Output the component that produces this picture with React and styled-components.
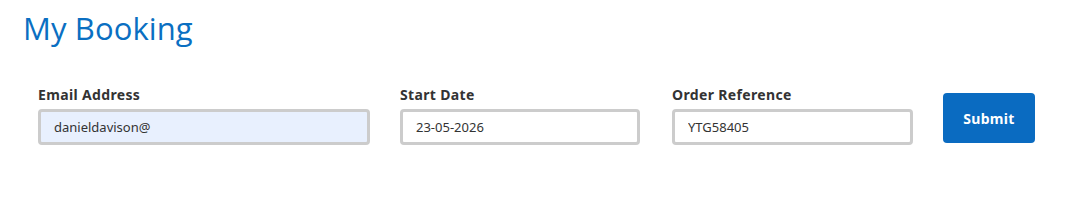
import React from "react";
import styled, { createGlobalStyle } from "styled-components";

const Global = createGlobalStyle`
  html, body { margin: 0; padding: 0; background: #fff; }
  body { font-family: "Open Sans", "Noto Sans", sans-serif; color: #333; }
  * { box-sizing: border-box; }
`;

const Page = styled.div`
  padding: 7px 0 0 23px;
`;

const Title = styled.h1`
  margin: 0;
  font-family: "Open Sans", sans-serif;
  font-weight: 400;
  font-size: 31px;
  line-height: 42px;
  color: #0a6fc2;
  letter-spacing: 0.1px;
`;

const Form = styled.form`
  display: flex;
  align-items: flex-end;
  margin: 36px 0 0 15px;
`;

const Field = styled.label`
  display: flex;
  flex-direction: column;
  width: ${(p) => p.$w}px;
  margin-right: ${(p) => p.$gap}px;
`;

const LabelText = styled.span`
  font-family: "Noto Sans", sans-serif;
  font-weight: 700;
  font-size: 14px;
  letter-spacing: 0.35px;
  line-height: 19px;
  color: #333;
  margin-bottom: 5px;
`;

const Input = styled.input`
  height: 36px;
  width: 100%;
  border: 3px solid #cccccc;
  border-radius: 4px;
  padding: 0 13px;
  font-family: "Noto Sans", sans-serif;
  font-size: 13px;
  color: #333;
  background: ${(p) => (p.$filled ? "#e8f0fe" : "#fff")};
  outline: none;
`;

const Button = styled.button`
  width: 92px;
  height: 50px;
  margin-bottom: 2px;
  border: none;
  border-radius: 4px;
  background: #0a6bc1;
  color: #fff;
  font-family: "Noto Sans", sans-serif;
  font-weight: 700;
  font-size: 14px;
  letter-spacing: 0.3px;
`;

export default function App() {
  return (
    <>
      <Global />
      <Page>
        <Title>My Booking</Title>
        <Form onSubmit={(e) => e.preventDefault()}>
          <Field $w={332} $gap={30}>
            <LabelText>Email Address</LabelText>
            <Input $filled defaultValue="danieldavison@" />
          </Field>
          <Field $w={240} $gap={32}>
            <LabelText>Start Date</LabelText>
            <Input defaultValue="23-05-2026" />
          </Field>
          <Field $w={241} $gap={30}>
            <LabelText>Order Reference</LabelText>
            <Input defaultValue="YTG58405" />
          </Field>
          <Button type="submit">Submit</Button>
        </Form>
      </Page>
    </>
  );
}
